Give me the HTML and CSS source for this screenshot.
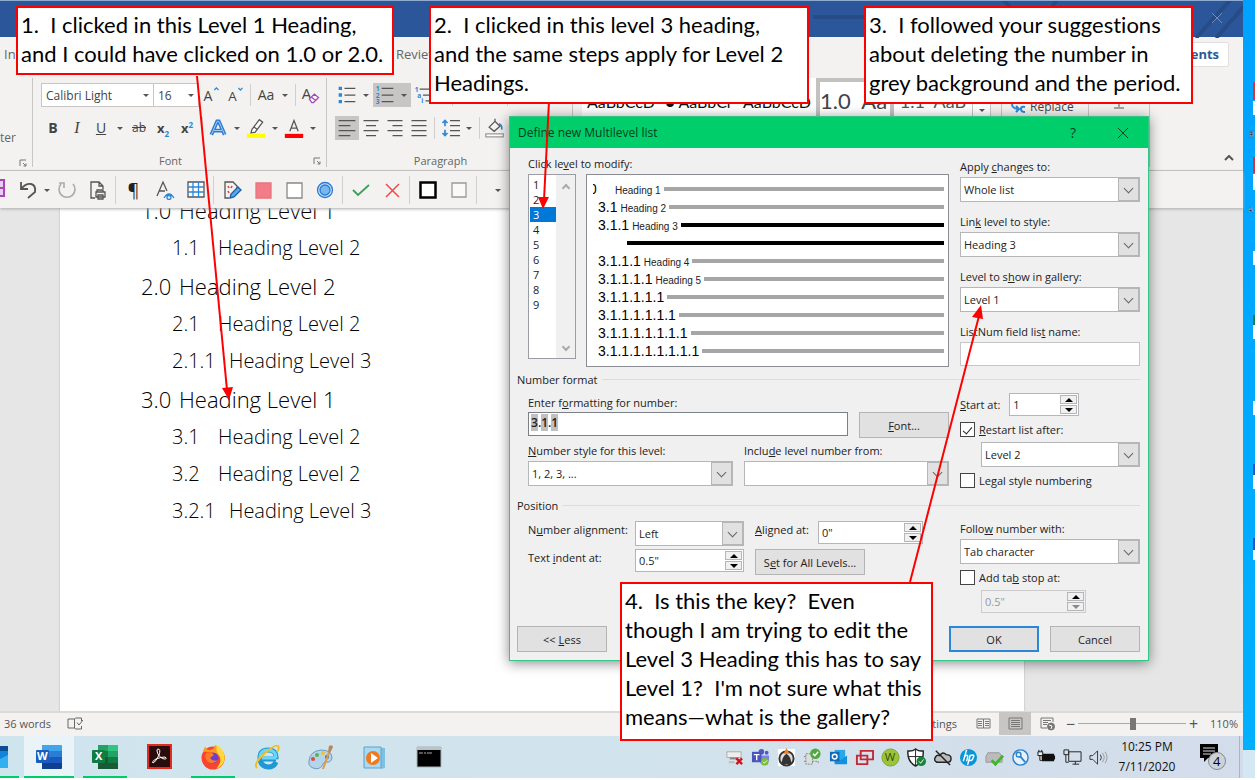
FILE: index.html
```html
<!DOCTYPE html>
<html lang="en">
<head>
<meta charset="utf-8">
<title>Define new Multilevel list</title>
<link rel="stylesheet" href="styles.css">
</head>
<body>
<div class="desktop">
  <div class="main">
    <section class="word">
      <header class="titlebar">
        <svg class="titlebar-art" viewBox="0 0 430 37" width="430" height="37" fill="none" stroke="#264b85" stroke-width="4"><path d="M0 16H190M190 -2l20 24h20l14-24M383 37l36-40M403 37l30-34"/></svg>
        <button class="win-close" aria-label="Close window"><svg width="12" height="12" viewBox="0 0 12 12" stroke="#6f8dbd" fill="none"><path d="M1 1l10 10M11 1L1 11"/></svg></button>
      </header>
      <nav class="tabs">
        <a href="#insert">In</a>
        <a class="tab-review" href="#review">Review</a>
        <button class="comments">Comments</button>
      </nav>
      <div class="ribbon">
        <div class="group clip">
          <span class="painter">ter</span>
          <div class="group-foot"><svg class="launch" viewBox="0 0 8 8"><path d="M1 7V1h6M4 4l3 3M7 4.500V7H4.500"/></svg></div>
        </div>
        <div class="group font">
          <div class="row">
            <button class="combo wide">Calibri Light<i class="tri"></i></button><button class="combo">16<i class="tri"></i></button>
            <button class="tool" aria-label="Grow font"><svg viewBox="0 0 24 24"><text x="3" y="19" font-size="17">A</text><path d="M16 6l2.500-2.500L21 6" class="blue"/></svg></button>
            <button class="tool" aria-label="Shrink font"><svg viewBox="0 0 24 24"><text x="4" y="19" font-size="16">A</text><path d="M16 3.500L18.500 6 21 3.500" class="blue"/></svg></button>
            <i class="sep"></i>
            <button class="tool">Aa</button><button class="drop" aria-label="Case options"></button>
            <i class="sep"></i>
            <button class="tool" aria-label="Clear formatting"><svg viewBox="0 0 24 24"><text x="1" y="17" font-size="18">A</text><path d="M10 17l6-6 5 4-6 6h-2z M12.500 14.500l5 4" stroke="#a844b5" fill="#fff" stroke-width="1.500"/></svg></button>
          </div>
          <div class="row">
            <button class="tool"><b>B</b></button><button class="tool serif"><em>I</em></button><button class="tool"><u>U</u></button><button class="drop" aria-label="Underline options"></button>
            <button class="tool small"><s>ab</s></button>
            <button class="tool script"><b>x<sub>2</sub></b></button><button class="tool script"><b>x<sup>2</sup></b></button>
            <i class="sep"></i>
            <button class="tool" aria-label="Text effects"><svg viewBox="0 0 24 24"><path d="M4 20L11 4h2l7 16M7 15h10" stroke="#2b7cd3" stroke-width="4.500"/><path d="M4 20L11 4h2l7 16M7 15h10" stroke="#b9dcf7" stroke-width="1"/></svg></button><button class="drop" aria-label="Effect options"></button>
            <button class="tool" aria-label="Highlight"><svg viewBox="0 0 24 24"><path d="M7 14l9-12 4 3-9 12-5 1zM10 11l4 3" fill="#fff"/><path d="M1 19h22v5H1z" fill="#ffff00" stroke="none"/></svg></button><button class="drop" aria-label="Highlight options"></button>
            <button class="tool" aria-label="Font colour"><svg viewBox="0 0 24 24"><path d="M7 16L12 3l5 13M8.500 12h7"/><path d="M1 19h22v5H1z" fill="#ff0000" stroke="none"/></svg></button><button class="drop" aria-label="Colour options"></button>
          </div>
          <div class="group-foot"><span>Font</span><svg class="launch" viewBox="0 0 8 8"><path d="M1 7V1h6M4 4l3 3M7 4.500V7H4.500"/></svg></div>
        </div>
        <div class="group para">
          <div class="row">
            <button class="tool" aria-label="Bullets"><svg viewBox="0 0 24 24"><path d="M9 4h13M9 12h13M9 20h13"/><path d="M2 2h4v4H2zM2 10h4v4H2zM2 18h4v4H2z" fill="#2b88d8" stroke="none"/></svg></button><button class="drop" aria-label="Bullet options"></button>
            <span class="pressed"><button class="tool" aria-label="Numbering"><svg viewBox="0 0 24 24"><path d="M8 4h14M8 12h14M8 20h14"/><g class="num"><text x="1" y="7">1</text><text x="1" y="15">2</text><text x="1" y="23">3</text></g></svg></button><button class="drop" aria-label="Numbering options"></button></span>
            <button class="tool" aria-label="Multilevel list"><svg viewBox="0 0 24 24"><path d="M8 5h14M12 12h10M15 19h7"/><g class="num"><text x="2" y="8">1</text><text x="5" y="15">a</text><text x="10" y="22">i</text></g></svg></button><button class="drop" aria-label="Multilevel options"></button>
            <i class="sep"></i>
            <button class="tool" aria-label="Decrease indent"><svg viewBox="0 0 24 24"><path d="M4 6h16M10 12h10M4 20h16"/></svg></button>
            <button class="tool" aria-label="Increase indent"><svg viewBox="0 0 24 24"><path d="M4 6h16M10 12h10M4 20h16"/></svg></button>
            <i class="sep"></i>
            <button class="tool" aria-label="Sort"><svg viewBox="0 0 24 24"><path d="M4 12h6l-6 9h7M17 3v18M14 18l3 3 3-3"/></svg></button>
          </div>
          <div class="row">
            <button class="tool pressed" aria-label="Align left"><svg viewBox="0 0 24 24"><path d="M2 3h20M2 9h14M2 15h20M2 21h14"/></svg></button>
            <button class="tool" aria-label="Centre"><svg viewBox="0 0 24 24"><path d="M3 3h18M6 9h12M3 15h18M6 21h12"/></svg></button>
            <button class="tool" aria-label="Align right"><svg viewBox="0 0 24 24"><path d="M3 3h18M9 9h12M3 15h18M9 21h12"/></svg></button>
            <button class="tool" aria-label="Justify"><svg viewBox="0 0 24 24"><path d="M3 3h18M3 9h18M3 15h18M3 21h18"/></svg></button>
            <i class="sep"></i>
            <button class="tool" aria-label="Line spacing"><svg viewBox="0 0 24 24"><path d="M12 3h12M12 9h12M12 15h12M12 21h12"/><path class="blue" d="M6 3v7M3 6l3-3 3 3M6 14v7M3 18l3 3 3-3" stroke-width="2"/></svg></button><button class="drop" aria-label="Spacing options"></button>
            <i class="sep"></i>
            <button class="tool" aria-label="Shading"><svg viewBox="0 0 24 24"><path d="M5 11l7-7 6 6-7 6zM12 4V1"/><path d="M17 7q4 2 3 7" stroke="#2b88d8" stroke-width="2"/><path d="M1 19h21v3.500H1z" fill="#fff" stroke="#999"/></svg></button>
          </div>
          <div class="group-foot"><span>Paragraph</span></div>
        </div>
        <div class="group styles">
          <div class="gallery">
            <button class="style">AaBbCcD</button>
            <button class="style">● AaBbCr</button>
            <button class="style">AaBbCcD</button>
            <button class="style big chosen">1.0&nbsp; Aa</button>
            <button class="style mid">1.1&nbsp; AaB</button>
            <button class="more" aria-label="More styles"><i class="tri"></i></button>
          </div>
        </div>
        <div class="group editing">
          <button class="replace"><svg width="16" height="12" viewBox="0 0 16 12" fill="none" stroke="#2b88d8" stroke-width="2"><path d="M3 1Q0 7 8 8M6 5l3 3-3 3M15 6q-4-1-4 2t4 3"/></svg>Replace</button>
        </div>
        <div class="group voice"><svg width="10" height="8" viewBox="0 0 10 8" stroke="#555" fill="none"><path d="M5 0v5M0 6h10"/></svg></div>
        <button class="collapse" aria-label="Collapse ribbon"><svg width="10" height="6" viewBox="0 0 10 6" stroke="#555" stroke-width="2" fill="none"><path d="M1 5l4-4 4 4"/></svg></button>
      </div>
      <div class="quick">
        <button class="save" aria-label="Save"><svg viewBox="0 0 5 18" width="5" height="18"><path d="M0 0h5v18H0z" fill="#a844b5"/><path d="M0 2h3v6H0zM0 10h3v6H0z" fill="#e9cdee"/></svg></button>
        <button class="q" aria-label="Undo"><svg viewBox="0 0 20 20"><path d="M3 2v7h7M3 9q5-6 10-5t4 8L10 18" stroke-width="1.800"/></svg></button><button class="drop slim" aria-label="Undo options"></button>
        <button class="q redo" aria-label="Redo"><svg viewBox="0 0 20 20"><path d="M4 4a8 8 0 1 0 12 0M2 3h5v5" stroke-width="1.600"/></svg></button>
        <button class="q" aria-label="Print"><svg viewBox="0 0 20 20"><path d="M7 18H3V2h8l4 4v3M11 2v4h4M9 12v-2h6v2M8 12h9v5H8zM10 15h5v4h-5z"/></svg></button>
        <i class="sep"></i>
        <button class="q pil">¶</button>
        <button class="q" aria-label="Styles"><svg viewBox="0 0 20 20"><path d="M2 16L8 2l4 9M4 11h6"/><path class="blue" d="M9 18q5-8 10 0M12 17.500a2 2 0 1 1 4 0a2 2 0 1 1-4 0"/></svg></button>
        <button class="q" aria-label="Table"><svg viewBox="0 0 20 20"><path d="M2 2h16v15H2z" fill="#fff"/><path class="blue" d="M7 2v15M12.500 2v15M2 7h16M2 12h16"/></svg></button>
        <i class="sep"></i>
        <button class="q" aria-label="Edit"><svg viewBox="0 0 20 20"><path d="M7 18H3V2h8l4 4v2"/><path d="M6 6l1 2M10 6l-1 2M6 11l1 2" stroke="#e03a3a" stroke-width="1.500"/><path d="M8 18l1-4 7-7 3 3-7 7z" fill="#5aa5e8" stroke="#1b5fa8"/></svg></button>
        <button class="q" aria-label="Pink fill"><svg viewBox="0 0 20 20"><path d="M3 3h15v15H3z" fill="#f27d89" stroke="#e8747f"/></svg></button>
        <button class="q" aria-label="Box"><svg viewBox="0 0 20 20"><path d="M3 3h15v15H3z" fill="#fff" stroke="#888"/></svg></button>
        <button class="q" aria-label="Circle"><svg viewBox="0 0 20 20"><circle cx="10" cy="10" r="7.500" fill="#c9e1f7" stroke="#2b7cd3"/><circle cx="10" cy="10" r="5" fill="#79b6ee" stroke="#2b7cd3"/></svg></button>
        <i class="sep"></i>
        <button class="q" aria-label="Accept"><svg viewBox="0 0 20 20"><path d="M2 10l5 5L18 5" stroke="#3c9f5c" stroke-width="1.800"/></svg></button>
        <button class="q" aria-label="Reject"><svg viewBox="0 0 20 20"><path d="M4 4l13 13M17 4L4 17" stroke="#f04a4a" stroke-width="1.500"/></svg></button>
        <i class="sep"></i>
        <button class="q" aria-label="Thick border"><svg viewBox="0 0 20 20"><path d="M2.500 2.500h15v15h-15z" fill="#fff" stroke="#000" stroke-width="2.500"/></svg></button>
        <button class="q" aria-label="Thin border"><svg viewBox="0 0 20 20"><path d="M3 3h14v14H3z" fill="#f9f9f9" stroke="#999"/></svg></button>
        <i class="sep"></i>
        <button class="drop over" aria-label="Customise toolbar"></button>
      </div>
      <div class="canvas">
        <article class="page">
          <h1><span>1.0</span>Heading Level 1</h1>
          <h2><span>1.1</span>Heading Level 2</h2>
          <h1><span>2.0</span>Heading Level 2</h1>
          <h2><span>2.1</span>Heading Level 2</h2>
          <h3><span>2.1.1</span>Heading Level 3</h3>
          <h1><span>3.0</span>Heading Level 1</h1>
          <h2><span>3.1</span>Heading Level 2</h2>
          <h2><span>3.2</span>Heading Level 2</h2>
          <h3><span>3.2.1</span>Heading Level 3</h3>
        </article>
      </div>
      <footer class="status">
        <span class="words">36 words</span>
        <svg width="16" height="13" viewBox="0 0 16 13" fill="none" stroke="#666"><path d="M7.500 2H1v9h6.500V2q0 0 1-1h6v3M7.500 11l1 1h6V9M10 5.500l2 2.500 4-5"/></svg>
        <span class="display">Display Settings</span>
        <button class="view" aria-label="Read mode"><svg width="15" height="13" viewBox="0 0 15 13" fill="none" stroke="#777"><path d="M7.500 2H1v9h6.500zM7.500 2H14v9H7.500zM2 4.500h4M2 6.500h4M2 8.500h4M9 4.500h4M9 6.500h4M9 8.500h4"/></svg></button>
        <button class="view on" aria-label="Print layout"><svg width="15" height="13" viewBox="0 0 15 13" fill="none" stroke="#777"><path d="M1 1h13v11H1zM3 3.500h9M3 5.500h9M3 7.500h9M3 9.500h9"/></svg></button>
        <button class="view" aria-label="Web layout"><svg width="15" height="14" viewBox="0 0 15 14" fill="none" stroke="#777"><path d="M7 11H1V1h12v4M3 3.500h8M3 5.500h5M3 7.500h4"/><circle cx="11" cy="9.500" r="3.500" fill="#777"/><path d="M9 8l3 1-1 3" stroke="#fff"/></svg></button>
        <button class="zoom-step">−</button>
        <input class="slider" type="range" min="0" max="100" value="51" aria-label="Zoom">
        <button class="zoom-step">+</button>
        <span class="percent">110%</span>
      </footer>
    </section>
    <footer class="taskbar">
      <button class="app first run" aria-label="Mail"><svg viewBox="0 0 8 26"><path d="M0 2h8v22H0z" fill="#1583d8"/><path d="M0 2h8v5H0z" fill="#0b4e96"/><path d="M0 15l8-4v13H0z" fill="#32b0f0"/></svg></button>
      <button class="app run active" aria-label="Word"><svg viewBox="0 0 26 26"><path d="M6 1h19q1 0 1 1v5H6z" fill="#41a5ee"/><path d="M6 7h20v6H6z" fill="#2b7cd3"/><path d="M6 13h20v6H6z" fill="#185abd"/><path d="M6 19h20v5q0 1-1 1H6z" fill="#103f91"/><rect y="6" width="13" height="13" rx="1" fill="#1a5dbe"/><text x="1" y="16" class="logo">W</text></svg></button>
      <button class="app run" aria-label="Excel"><svg viewBox="0 0 26 26"><path d="M6 1h10v6H6z" fill="#21a366"/><path d="M16 1h10v6H16z" fill="#33c481"/><path d="M6 7h10v6H6z" fill="#107c41"/><path d="M16 7h10v6H16z" fill="#21a366"/><path d="M6 13h20v12H6z" fill="#185c37"/><path d="M16 13h10v6H16z" fill="#107c41"/><rect y="6" width="13" height="13" rx="1" fill="#107c41"/><text x="3" y="16" class="logo">X</text></svg></button>
      <button class="app" aria-label="Acrobat"><svg viewBox="0 0 26 26"><path d="M2 1h23v23H2z" fill="#2a0c0c" stroke="#e52b1d" stroke-width="2"/><path d="M12 5q3 0 1 6-3 7-6 8-2-1 3-4 5-2 9-2 3 2-1 2-6-2-7-8 0-2 1-2z" fill="none" stroke="#fff"/></svg></button>
      <button class="app run" aria-label="Firefox"><svg viewBox="0 0 26 26"><circle cx="13" cy="14" r="11.500" fill="#f9452d"/><path d="M3 8q1-5 3-5 0 3 4 3 5-1 5-5 9 4 10 13-1 9-9 11 8-8 2-14-8-4-15-3z" fill="#ff9a1f"/><path d="M17 1q9 6 7 16-3 6-7 7 6-8 2-13-4-4-2-10z" fill="#ffd83a"/><circle cx="13" cy="14" r="5.500" fill="#6b3fd1"/><path d="M6 9q6-2 8 2l-4 3q3 4 8 2-4 5-10 2-4-4-2-9z" fill="#ff7a22"/></svg></button>
      <button class="app" aria-label="Internet Explorer"><svg viewBox="0 0 26 26" fill="none"><path d="M22 15H8M22 15q1-9-8-9-8 0-8 8t8 9q6 0 8-5" stroke="#1c9ad6" stroke-width="5"/><path d="M22 14H8M22 14q0-8-8-8-8 0-8 8" stroke="#6fd5f8" stroke-width="3"/><path d="M3 24q-4-4 7-14T24 2q2 2-1 6" stroke="#f4bf26" stroke-width="2"/></svg></button>
      <button class="app" aria-label="Paint"><svg viewBox="0 0 26 26"><path d="M1 17Q2 7 13 6q11 0 11 8-1 5-6 4-3 0-4 4-3 4-9 2-5-2-4-7z" fill="#b3d4ea" stroke="#6d9cbd"/><circle cx="5" cy="15" r="2" fill="#e34a3d"/><circle cx="9" cy="11" r="2" fill="#54b548"/><circle cx="15" cy="9" r="2" fill="#f2c230"/><circle cx="19" cy="13" r="2" fill="#4169c8"/><path d="M14 25l6-17 2 1-6 16z" fill="#e39846"/><path d="M20 8l1-6q3-2 4 1l-3 6z" fill="#b88654"/></svg></button>
      <button class="app" aria-label="Media player"><svg viewBox="0 0 26 26"><path d="M6 3l17 1v20l-4 1z" fill="#7fbfe0"/><path d="M2 3h17v21H2z" fill="#a9d9f0" stroke="#5ba3cb"/><circle cx="11" cy="14" r="7" fill="#f07920"/><path d="M9 9v10l7-5z" fill="#fff"/></svg></button>
      <button class="app" aria-label="Command prompt"><svg viewBox="0 0 26 26"><path d="M1 3h24v20H1z" fill="#000" stroke="#a9b3b9"/><path d="M1 3h24v3H1z" fill="#b9c4ca"/><path d="M3 9h4M8 9h2M11 9h5" stroke="#aaa"/></svg></button>
      <div class="tray">
        <button aria-label="Scanner"><svg viewBox="0 0 20 20"><path d="M2 4h15v6H2z" fill="#eee" stroke="#aaa"/><path d="M5 10h9v2H5z" fill="#888"/><path d="M4 14h6v2H4z" fill="#bbb"/><path d="M12 11l6 6M18 11l-6 6" stroke="#d8101c" stroke-width="2.500"/></svg></button>
        <button aria-label="Teams"><svg viewBox="0 0 20 20"><circle cx="11" cy="4" r="3" fill="#5059c9"/><circle cx="16.500" cy="5" r="2" fill="#5059c9"/><path d="M8 8h11v5q-3 5-9 3z" fill="#7b83eb"/><path d="M1 4h10v11H1z" fill="#4b53bc"/><path d="M3 7h6M6 7v6" stroke="#fff" stroke-width="1.500"/><circle cx="14.500" cy="14.500" r="4" fill="#7cba3d"/><path d="M12.500 14.500l1.500 1.500 3-3" stroke="#fff" fill="none"/></svg></button>
        <button aria-label="Capture"><svg viewBox="0 0 20 20"><path d="M1 1h18v18H1z" fill="#fff"/><circle cx="10" cy="11" r="7.500" fill="#ddd" stroke="#333" stroke-width="2"/><path d="M5 17q0-8 5-11 5 3 5 11z" fill="#333"/><path d="M10 0l3 6H7z" fill="#f08020"/></svg></button>
        <button aria-label="Sync"><svg viewBox="0 0 20 20"><path d="M3 6h7v11H3zM1 9h2M1 14h2M10 14h6v3" fill="#ddd" stroke="#888" stroke-dasharray="2 1"/><circle cx="13" cy="6" r="5.500" fill="#4eaa3c"/><path d="M10.500 6l2 2L16 4" stroke="#fff" fill="none" stroke-width="1.500"/></svg></button>
        <button aria-label="Outlook"><svg viewBox="0 0 20 20"><path d="M6 2h11v14H6z" fill="#28a8ea"/><path d="M6 9l6 4 7-5v9H6z" fill="#1490df"/><path d="M1 4h10v10H1z" fill="#0f6cbd"/><circle cx="6" cy="9" r="2.500" fill="none" stroke="#fff" stroke-width="1.500"/></svg></button>
        <button aria-label="Windows"><svg viewBox="0 0 20 20"><path d="M6 3h13v9H6zM2 8h11v9H2z" fill="#d9e2ec" stroke="#c12b36" stroke-width="2"/></svg></button>
        <button aria-label="Webroot"><svg viewBox="0 0 20 20"><circle cx="10" cy="10" r="9" fill="#9cc43a" stroke="#7fa32a"/><text x="4" y="14" font-size="12" fill="#35500a">W</text></svg></button>
        <button aria-label="Security"><svg viewBox="0 0 20 20"><path d="M9 1q4 3 8 2 1 11-8 16Q0 14 1 3q4 1 8-2z" fill="#fff" stroke="#222" stroke-width="1.500"/><path d="M9 1v17M1 9h16" stroke="#222"/><circle cx="15" cy="14" r="5" fill="#16833b"/><path d="M12.500 14l2 2 3-4" stroke="#fff" fill="none"/></svg></button>
        <button aria-label="Cloud"><svg viewBox="0 0 20 20" fill="none" stroke="#222"><path d="M4 15q-4-2-1-6 1-2 4-1 3-5 7-1 5 0 5 4 0 4-4 4z" fill="#bbb" stroke-width="1.500"/><path d="M3 3l15 15" stroke-width="1.500"/></svg></button>
        <button aria-label="HP"><svg viewBox="0 0 20 20"><circle cx="10" cy="10" r="9" fill="#0896d8"/><path d="M8 2L4.500 14M6 9q4-3 3 1l-1 4M12 7l-3 11M12 8q5-2 3 2-1 4-4 3" stroke="#fff" stroke-width="1.500" fill="none"/></svg></button>
        <button aria-label="Printer ready"><svg viewBox="0 0 20 20"><path d="M3 5h12l3 4v6H1V9z" fill="#bbb" stroke="#999"/><path d="M7 13l4 4 8-9" stroke="#3db72d" stroke-width="3" fill="none"/></svg></button>
        <button aria-label="Key"><svg viewBox="0 0 20 20"><circle cx="10" cy="10" r="8" fill="#e6f2fb" stroke="#2c83cc" stroke-width="1.500"/><circle cx="8" cy="7" r="2.500" fill="none" stroke="#2c83cc" stroke-width="1.500"/><path d="M10 9l5 6" stroke="#2c83cc" stroke-width="2"/></svg></button>
        <button aria-label="Battery"><svg viewBox="0 0 20 20"><path d="M5 6h13v8H5zM18 8h1v4h-1z" fill="#111"/><path d="M1 4h5v4H1zM3 8v5h2M2 2v2M5 2v2" fill="#eee" stroke="#111"/></svg></button>
        <button aria-label="Network"><svg viewBox="0 0 20 20" fill="none" stroke="#222"><path d="M6 4h13v10H6zM10 17h7M13 14v3M1 2h5v5H1zM3 7v8h3"/></svg></button>
        <button aria-label="Volume"><svg viewBox="0 0 20 20" fill="none" stroke="#333"><path d="M1 8h3l5-5v14l-5-5H1zM12 7q2 3 0 6"/><path d="M14 5q4 5 0 10M17 4q4 6 0 12" stroke="#999"/></svg></button>
        <div class="clock"><span>10:25 PM</span><span>7/11/2020</span></div>
        <button class="notes" aria-label="4 notifications"><svg viewBox="0 0 28 28"><path d="M1 1h18v14H9l-4 4v-4H1z" fill="#000"/><path d="M4 5h12M4 8h12M4 11h8" stroke="#ddd"/><circle cx="18" cy="18" r="8.500" fill="#ccd2da" stroke="#888"/><text x="14" y="23" font-size="13" fill="#000">4</text></svg></button>
      </div>
    </footer>
  </div>
  <aside class="second">
    <svg width="12" height="560" viewBox="0 0 12 560"><path d="M10 82h2v18h-2zM10 157h2v16h-2z" fill="#d33"/><path d="M10 101h2v14h-2zM10 174h2v16h-2zM10 251h2v14h-2zM10 401h2v14h-2zM10 475h2v14h-2zM10 325h2v14h-2zM10 550h2v10h-2z" fill="#fff"/><path d="M10 464h2v11h-2zM10 538h2v12h-2z" fill="#2457c5"/><path d="M10 315h2v10h-2z" fill="#1b7d45"/><g font-size="8" fill="#fff" stroke="#234" stroke-width="0.300"><text x="6" y="137">R</text><text x="5" y="212">A</text></g></svg>
  </aside>

  <form class="dialog" aria-label="Define new Multilevel list">
    <div class="dialog-title"><span>Define new Multilevel list</span><button type="button">?</button><button type="button" aria-label="Close"><svg width="12" height="12" viewBox="0 0 12 12" stroke="#0a4a2a" fill="none"><path d="M1 1l10 10M11 1L1 11"/></svg></button></div>
    <div class="dialog-body">
      <div class="split">
        <div class="levels-area">
          <div class="label">Click le<u>v</u>el to modify:</div>
          <div class="levels-row">
            <div class="levels">
              <div class="level-list"><button type="button">1</button><button type="button">2</button><button type="button" class="picked">3</button><button type="button">4</button><button type="button">5</button><button type="button">6</button><button type="button">7</button><button type="button">8</button><button type="button">9</button></div>
              <div class="scroll"><i class="up"></i><i class="down"></i></div>
            </div>
            <div class="preview">
              <div class="pv lead"><b class="cut"><span>0</span></b><small>Heading 1</small><i></i></div>
              <div class="pv"><b>3.1</b><small>Heading 2</small><i></i></div>
              <div class="pv cur"><b>3.1.1</b><small>Heading 3</small><i></i></div>
              <div class="pv cur cont"><i></i></div>
              <div class="pv"><b>3.1.1.1</b><small>Heading 4</small><i></i></div>
              <div class="pv"><b>3.1.1.1.1</b><small>Heading 5</small><i></i></div>
              <div class="pv"><b>3.1.1.1.1.1</b><i></i></div>
              <div class="pv"><b>3.1.1.1.1.1.1</b><i></i></div>
              <div class="pv"><b>3.1.1.1.1.1.1.1</b><i></i></div>
              <div class="pv"><b>3.1.1.1.1.1.1.1.1</b><i></i></div>
            </div>
          </div>
        </div>
        <div class="side top-side">
          <label for="apply">Apply <u>c</u>hanges to:</label>
          <span class="select"><select id="apply"><option>Whole list</option></select></span>
          <label for="link">Lin<u>k</u> level to style:</label>
          <span class="select"><select id="link"><option>Heading 3</option></select></span>
          <label for="gal">Level to s<u>h</u>ow in gallery:</label>
          <span class="select"><select id="gal"><option>Level 1</option></select></span>
          <label for="listnum">ListNum field lis<u>t</u> name:</label>
          <input class="field" id="listnum" type="text">
        </div>
      </div>
      <div class="section">Number format</div>
      <div class="split">
        <div class="format">
          <div class="label">Enter f<u>o</u>rmatting for number:</div>
          <div class="format-row">
            <div class="field code" contenteditable="true" role="textbox" aria-label="Formatting for number"><mark>3</mark>.<mark>1</mark>.<mark>1</mark></div>
            <button type="button" class="push font-btn"><u>F</u>ont...</button>
          </div>
          <div class="pair">
            <div><label for="nstyle"><u>N</u>umber style for this level:</label><span class="select"><select id="nstyle"><option>1, 2, 3, ...</option></select></span></div>
            <div><label for="incl">Inclu<u>d</u>e level number from:</label><span class="select"><select id="incl"><option></option></select></span></div>
          </div>
        </div>
        <div class="side">
          <div class="line start"><label for="start"><u>S</u>tart at:</label><span class="spin s70"><input id="start" value="1"><span class="steps"><button type="button" aria-label="Up"></button><button type="button" aria-label="Down"></button></span></span></div>
          <label class="check"><input type="checkbox" checked><span><u>R</u>estart list after:</span></label>
          <span class="select inset"><select aria-label="Restart list after"><option>Level 2</option></select></span>
          <label class="check"><input type="checkbox"><span>Le<u>g</u>al style numbering</span></label>
        </div>
      </div>
      <div class="section">Position</div>
      <div class="split">
        <div class="position">
          <label for="align">N<u>u</u>mber alignment:</label><span class="select"><select id="align"><option>Left</option></select></span>
          <label for="at"><u>A</u>ligned at:</label><span class="spin"><input id="at" value='0"'><span class="steps"><button type="button" aria-label="Up"></button><button type="button" aria-label="Down"></button></span></span>
          <label for="indent">Text <u>i</u>ndent at:</label><span class="spin"><input id="indent" value='0.5"'><span class="steps"><button type="button" aria-label="Up"></button><button type="button" aria-label="Down"></button></span></span>
          <button type="button" class="push setall">S<u>e</u>t for All Levels...</button>
        </div>
        <div class="side">
          <label class="follow" for="follow">Follo<u>w</u> number with:</label>
          <span class="select"><select id="follow"><option>Tab character</option></select></span>
          <label class="check"><input type="checkbox"><span>Add ta<u>b</u> stop at:</span></label>
          <span class="spin inset off"><input aria-label="Tab stop" value='0.5"' disabled><span class="steps"><button type="button" aria-label="Up"></button><button type="button" aria-label="Down"></button></span></span>
        </div>
      </div>
      <div class="actions">
        <button type="button" class="push">&lt;&lt; <u>L</u>ess</button>
        <button type="button" class="push ok">OK</button>
        <button type="button" class="push">Cancel</button>
      </div>
    </div>
  </form>

  <svg class="arrows" width="1257" height="780" viewBox="0 0 1257 780" stroke="#f00" stroke-width="2" fill="#f00">
    <path d="M197 76L227 390M549 101L544 200M910 582L979 316"/>
    <path stroke="none" d="M222 388l11-1-4 13zM538 197l11 0-6 12zM972 317l11 2-2-14z"/>
  </svg>
  <p class="note n1">1.&nbsp; I clicked in this Level 1 Heading,<br>and I could have clicked on 1.0 or 2.0.</p>
  <p class="note n2">2.&nbsp; I clicked in this level 3 heading,<br>and the same steps apply for Level 2<br>Headings.</p>
  <p class="note n3">3.&nbsp; I followed your suggestions<br>about deleting the number in<br>grey background and the period.</p>
  <p class="note n4">4.&nbsp; Is this the key?&nbsp; Even<br>though I am trying to edit the<br>Level 3 Heading this has to say<br>Level 1?&nbsp; I'm not sure what this<br>means—what is the gallery?</p>
</div>
</body>
</html>
```

FILE: styles.css
```css
* { box-sizing: border-box; }
body { margin: 0; background: #fff; overflow: hidden; font-family: "Open Sans", "Noto Sans", sans-serif; font-size: 12px; color: #222; }
button { font: inherit; color: inherit; border: 0; padding: 0; margin: 0; background: none; }
p, h1, h2, h3 { margin: 0; font-weight: 400; }
i { font-style: normal; }

.desktop { position: relative; display: flex; height: 100vh; padding: 0 2px 2px 0; }
.main { flex: 1; min-width: 0; display: flex; flex-direction: column; }
.second { width: 12px; background: linear-gradient(#00a2ff, #00b0ff 750px, #d3e8f2 750px); }
.second svg { display: block; }

/* Word window */
.word { flex: 1; min-height: 0; display: flex; flex-direction: column; background: #f3f2f1; }
.titlebar { height: 37px; flex: none; background: #2b579a; border-top: 1px solid #8fabd0; display: flex; align-items: center; justify-content: flex-end; position: relative; }
.titlebar-art { position: absolute; right: 0; top: 0; }
.win-close { position: relative; width: 52px; height: 32px; }
.tabs { height: 38px; flex: none; display: flex; align-items: center; font-size: 13px; padding: 0 14px 4px 4px; }
.tabs a { color: #666; text-decoration: none; width: 392px; }
.tabs .tab-review { width: auto; }
.comments { margin-left: auto; width: 90px; height: 25px; background: #fff; border: 1px solid #e1dfdd; border-radius: 2px; color: #2b579a; font-weight: 700; }
.ribbon { height: 96px; flex: none; display: flex; border-bottom: 1px solid #c8c6c4; color: #444; padding-top: 3px; }
.group { display: flex; flex-direction: column; border-right: 1px solid #c8c6c4; margin-bottom: 3px; padding: 5px 0 0 8px; gap: 9px; }
.group .row { display: flex; align-items: center; height: 24px; }
.group-foot { display: flex; align-items: center; justify-content: center; margin-top: 4px; font-size: 11px; height: 16px; position: relative; color: #666; }
.para .group-foot { padding-right: 26px; }
.font .group-foot { padding-right: 26px; }
.launch { position: absolute; right: 5px; width: 8px; height: 8px; fill: none; stroke: #777; }
.clip { width: 33px; padding-left: 0; justify-content: space-between; }
.painter { margin-top: 46px; color: #666; }
.font { width: 294px; }
.para { width: 246px; }
.combo { width: 46px; height: 24px; padding: 0 4px; display: flex; align-items: center; justify-content: space-between; background: #fff; border: 1px solid #c8c6c4; font-size: 12px; }
.combo.wide { width: 112px; border-right: 0; }
.tri, .drop::after { content: ""; border: 3px solid transparent; border-top-color: #555; border-bottom: 0; }
.tool { width: 24px; height: 24px; flex: none; font-size: 14px; line-height: 22px; text-align: center; }
.tool svg { width: 20px; height: 20px; display: block; margin: 0 auto; fill: none; stroke: #555; stroke-width: 1.5; }
.tool svg text { fill: #444; stroke: none; }
.tool .num text { font-size: 8px; font-weight: 700; fill: #2b88d8; }
.small { font-size: 12px; }
.script { font-size: 13px; }
.script sub, .script sup { font-size: 8px; line-height: 0; color: #2b88d8; }
.serif { font-family: "Liberation Serif", serif; font-size: 16px; }
.blue { stroke: #2b88d8; }
.drop { width: 14px; height: 24px; display: flex; align-items: center; justify-content: center; flex: none; }
.drop.slim { width: 8px; }
.drop.over { width: 38px; }
.sep { width: 1px; height: 22px; margin: 0 3px; background: #d2d0ce; flex: none; }
.pressed { background: #c8c6c4; display: flex; align-items: center; }
.styles { padding: 0 10px 0 9px; width: 428px; border: 0; }
.gallery { display: flex; height: 90px; background: #fff; }
.style { width: 78px; height: 46px; font-family: Lato, sans-serif; font-size: 16px; color: #111; white-space: nowrap; overflow: hidden; }
.style.big { font-size: 22px; color: #444; border: 4px solid #c4c2c0; text-align: left; height: 90px; padding-bottom: 46px; }
.style.mid { font-size: 18px; color: #555; }
.more { flex: 1; border: 1px solid #c8c6c4; padding-top: 30px; display: flex; align-items: flex-start; justify-content: center; }
.editing { width: 88px; border-left: 1px solid #c8c6c4; padding-top: 20px; }
.replace { display: flex; align-items: center; gap: 4px; font-size: 12px; }
.voice { width: 61px; align-items: center; padding-top: 24px; padding-left: 0; }
.collapse { margin: auto 9px 5px auto; }
.quick { height: 37px; flex: none; display: flex; align-items: center; box-shadow: 0 1px 3px #aaa; position: relative; padding-top: 1px; }
.quick .sep { margin: 0 2px; height: 28px; }
.save { width: 12px; text-align: left; }
.q { width: 31px; height: 26px; flex: none; }
.q svg { width: 20px; height: 20px; display: block; margin: 0 auto; fill: none; stroke: #555; stroke-width: 1.3; }
.redo svg { stroke: #aaa; }
.pil { font-size: 18px; line-height: 24px; }
.canvas { flex: 1; min-height: 0; background: #e6e6e6; overflow: hidden; padding: 0 219px 0 60px; }
.page { background: #fff; box-shadow: 0 0 1px 1px #d4d4d4; margin-top: -18px; height: calc(100% + 18px); font-family: "Open Sans", sans-serif; color: #000; }
.page h1, .page h2, .page h3 { display: flex; align-items: center; font-weight: 300; }
.page h1 { height: 39px; font-size: 22px; padding-left: 81px; }
.page h2, .page h3 { height: 37px; font-size: 20px; padding-left: 112px; }
.page h1 span { width: 38px; }
.page h2 span { width: 46px; }
.page h3 span { width: 57px; }
.status { height: 25px; flex: none; border-top: 2px solid #dcdad8; display: flex; align-items: center; color: #555; font-size: 11px; padding: 0 5px 2px 0; }
.words { margin: 0 16px 0 4px; }
.display { margin-left: auto; margin-right: 10px; }
.view { width: 32px; height: 23px; display: flex; align-items: center; justify-content: center; }
.view.on { background: #c8c6c4; }
.zoom-step { width: 15px; font-size: 16px; line-height: 18px; }
.slider { appearance: none; width: 108px; height: 12px; margin: 0; background: linear-gradient(#aaa, #aaa) center / 100% 1px no-repeat; }
.slider::-webkit-slider-thumb { appearance: none; width: 6px; height: 12px; background: #777; }
.percent { width: 37px; text-align: right; }

/* Taskbar */
.taskbar { height: 42px; flex: none; display: flex; background: linear-gradient(90deg, #cfe5ee, #d2e3ed 55%, #d3dcea); padding-right: 3px; }
.app { width: 54px; padding: 8px 5px 0; border: 0; display: flex; flex-direction: column; justify-content: space-between; align-items: center; }
.app svg { width: 26px; height: 26px; }
.app.first { width: 19px; padding: 8px 0 0; margin-right: 5px; align-items: flex-start; }
.app.first svg { width: 8px; }
.app.run::after { content: ""; height: 2px; width: 100%; background: #00cc6a; }
.app.active { background: #eaf3f8; padding: 8px 0 0; width: 50px; margin-right: 4px; }
.logo { font: 700 11px "Open Sans", sans-serif; fill: #fff; }
.tray { margin-left: auto; display: flex; align-items: center; border-right: 1px solid #aab4c0; }
.tray button { width: 26px; height: 20px; }
.tray svg { width: 19px; height: 19px; display: block; margin: auto; }
.clock { width: 72px; display: flex; flex-direction: column; align-items: center; font-size: 12px; line-height: 20px; color: #111; }
.tray .notes { width: 56px; height: 28px; padding-left: 4px; }
.tray .notes svg { width: 28px; height: 28px; }

/* Dialog */
.dialog { position: absolute; left: 509px; top: 116px; width: 640px; background: #f0f0f0; border: 1px solid #34c684; box-shadow: 0 2px 12px #0007; font-size: 11px; line-height: 15px; color: #222; }
.dialog-title { height: 31px; background: #00ce6a; display: flex; align-items: center; padding: 0 0 0 8px; font-size: 12px; color: #053d20; }
.dialog-title span { flex: 1; }
.dialog-title button { width: 50px; height: 30px; font-size: 14px; display: flex; align-items: center; justify-content: center; }
.dialog-body { padding: 8px 8px 8px 7px; }
.split { display: grid; grid-template-columns: 1fr 180px; gap: 11px; padding-left: 11px; }
.levels-row { display: flex; gap: 10px; margin-top: 3px; }
.levels { width: 48px; height: 185px; background: #fff; border: 1px solid #9a9da3; display: flex; margin-bottom: 8px; }
.level-list { flex: 1; padding: 2px 0 0 1px; display: flex; flex-direction: column; }
.level-list button { height: 15px; line-height: 15px; text-align: left; padding-left: 3px; }
.level-list .picked { background: #0078d7; color: #fff; }
.scroll { width: 19px; background: #f0f0f0; display: flex; flex-direction: column; justify-content: space-between; align-items: center; padding: 10px 0 8px; }
.scroll i { width: 6px; height: 6px; border: solid #aaa; border-width: 2px 0 0 2px; transform: rotate(45deg); }
.scroll .down { transform: rotate(225deg); }
.preview { flex: 1; height: 193px; background: #fff; border: 1px solid #8a8d93; padding: 5px 4px 0 11px; font-family: "Liberation Sans", Arial, sans-serif; }
.pv { display: flex; align-items: center; height: 18px; gap: 3px; }
.pv b { font-weight: 400; font-size: 14px; color: #000; }
.pv small { font-size: 10px; padding-top: 2px; }
.pv i { flex: 1; height: 4px; background: #a6a6a6; }
.pv.cur i { background: #000; }
.pv.cont { padding-left: 29px; }
.pv.lead { margin-left: -9px; }
.cut { width: 23px; display: flex; }
.cut span { clip-path: inset(0 0 0 4px); }
.side { display: flex; flex-direction: column; }
.top-side { padding-top: 3px; }
.top-side .select, .top-side .field { margin: 3px 0 12px; }
.top-side .field { margin-bottom: 0; }
.select { position: relative; display: block; height: 25px; background: #fff; border: 1px solid #b4b6ba; }
.select select { appearance: none; width: 100%; height: 100%; border: 0; background: none; font: inherit; color: inherit; padding: 0 20px 0 3px; }
.select::before { content: ""; position: absolute; right: 0; top: 0; bottom: 0; width: 19px; background: #e1e1e1; border: 1px solid #b4b6ba; }
.select::after { content: ""; position: absolute; right: 7px; top: 7px; width: 6px; height: 6px; border: solid #666; border-width: 0 1px 1px 0; transform: rotate(45deg); }
.field { height: 24px; width: 100%; border: 1px solid #c4c6ca; background: #fff; font: inherit; }
.section { display: flex; align-items: center; gap: 4px; height: 16px; margin-top: 4px; }
.section::after { content: ""; flex: 1; height: 1px; background: #dcdcdc; }
.format, .position { padding-top: 8px; }
.format-row { display: flex; gap: 11px; margin-top: 2px; }
.field.code { flex: 1; border-color: #7a7f88; padding: 1px 2px; font-weight: 600; font-size: 12px; line-height: 18px; }
mark { background: #c0c0c0; color: inherit; }
.push { width: 90px; height: 26px; background: #e1e1e1; border: 1px solid #b4b4b4; text-align: center; }
.pair { display: grid; grid-template-columns: 205px 1fr; gap: 11px; margin-top: 5px; }
.pair .select { margin-top: 3px; }
.line { display: flex; align-items: center; gap: 9px; margin: 6px 0 3px; height: 23px; }
.spin { display: flex; width: 105px; height: 23px; background: #fff; border: 1px solid #b4b6ba; padding: 1px; }
.spin.s70 { width: 70px; }
.spin input { flex: 1; min-width: 0; border: 0; background: none; font: inherit; color: inherit; padding: 0 2px; }
.spin.off { background: #f0f0f0; color: #999; border-color: #ccc; }
.steps { width: 17px; display: flex; flex-direction: column; gap: 1px; }
.steps button { flex: 1; background: #f0f0f0; border: 1px solid #b4b6ba; display: flex; align-items: center; justify-content: center; }
.steps button::after { content: ""; border: 4px solid transparent; border-top: 0; border-bottom-color: #000; }
.steps button:last-child::after { border: 4px solid transparent; border-bottom: 0; border-top-color: #000; }
.off .steps button:last-child::after { border-top-color: #888; }
.check { display: flex; align-items: center; gap: 4px; height: 18px; margin: 4px 0; }
.line + .check { margin-top: 1px; }
.check input { appearance: none; width: 15px; height: 15px; margin: 0; background: #fff; border: 1px solid #444; display: flex; justify-content: center; align-items: center; }
.check input:checked::after { content: ""; width: 4px; height: 8px; border: solid #222; border-width: 0 1px 1px 0; transform: rotate(40deg); }
.inset { margin-left: 21px; }
.position { display: grid; grid-template-columns: 107px 109px 74px 105px; grid-auto-rows: 25px; row-gap: 3px; }
.position .select, .position > label + .spin { width: 100%; }
.position label { padding-top: 1px; }
.position label[for="at"] { margin-left: 11px; white-space: nowrap; }
.position .setall { grid-column: 3 / 5; width: 110px; margin-left: 11px; }
.follow { padding-top: 8px; margin-bottom: 3px; }
.actions { display: flex; margin-top: 13px; }
.ok { margin: 0 11px 0 auto; border: 2px solid #2b88d8; }

/* Annotations */
.arrows { position: absolute; left: 0; top: 0; }
.note { position: absolute; background: #fff; border: 2px solid #f00; padding: 2px 3px 5px; font-family: Lato, "Open Sans", sans-serif; font-size: 22px; line-height: 29px; font-variant-ligatures: none; color: #000; white-space: nowrap; }
.n1 { left: 16px; top: 6px; width: 378px; }
.n2 { left: 429px; top: 6px; width: 380px; }
.n3 { left: 864px; top: 6px; width: 329px; }
.n4 { left: 620px; top: 582px; width: 313px; padding-bottom: 8px; }
```
